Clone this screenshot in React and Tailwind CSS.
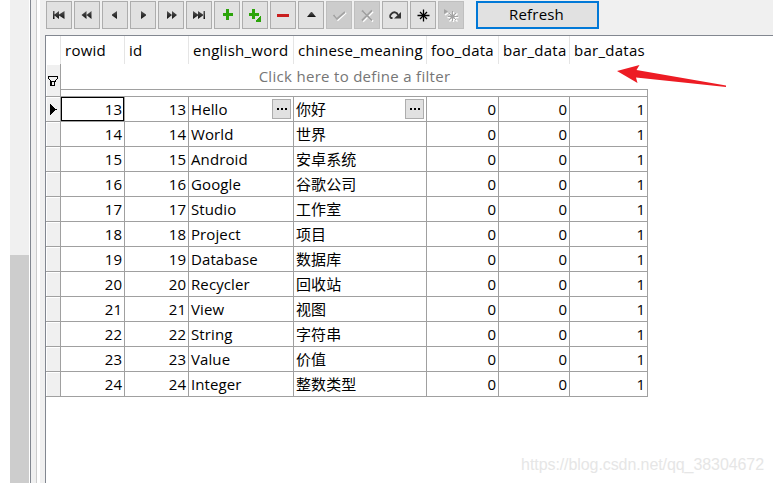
const columns = [
  { key: "rowid", width: "w-16" },
  { key: "id", width: "w-16" },
  { key: "english_word", width: "w-[105px]" },
  { key: "chinese_meaning", width: "w-[133px]" },
  { key: "foo_data", width: "w-[72px]" },
  { key: "bar_data", width: "w-[71px]" },
  { key: "bar_datas", width: "w-[78px]" },
];

const words = [
  [13, "Hello", "你好"],
  [14, "World", "世界"],
  [15, "Android", "安卓系统"],
  [16, "Google", "谷歌公司"],
  [17, "Studio", "工作室"],
  [18, "Project", "项目"],
  [19, "Database", "数据库"],
  [20, "Recycler", "回收站"],
  [21, "View", "视图"],
  [22, "String", "字符串"],
  [23, "Value", "价值"],
  [24, "Integer", "整数类型"],
];

// Every icon is drawn on a 24x26 grid, the inside of a toolbar button
const icons = [
  {
    name: "first",
    art: <path fill="url(#ink)" d="M6 9h1.500v8H6zM12 9v8l-4.500-3.500v-1zM17.500 9v8L12 13.500v-1z" />,
  },
  {
    name: "prior page",
    art: <path fill="url(#ink)" d="M11.500 9v8l-5-4zM16.500 9v8l-5-4z" />,
  },
  { name: "prior", art: <path fill="url(#ink)" d="M14 9v8l-5-3.500v-1z" /> },
  { name: "next", art: <path fill="url(#ink)" d="M10 9v8l5-3.500v-1z" /> },
  {
    name: "next page",
    art: <path fill="url(#ink)" d="M8 9v8l5-4zM13 9v8l5-4z" />,
  },
  {
    name: "last",
    art: <path fill="url(#ink)" d="M6 9v8l5-3.500v-1zM11 9v8l5-3.500v-1zM16.500 9H18v8h-1.500z" />,
  },
  {
    name: "insert",
    art: <path fill="#2ca40b" d="M11 7h3v4h4v3h-4v4h-3v-4H8v-3h3z" />,
  },
  {
    name: "append",
    art: (
      <path
        fill="#2ca40b"
        d="M9 7h3v4h4v3h-4v3H9v-3H6v-3h3zM18 14v6h-5v-2h1v-1h1v-1h1v-1h1v-1z"
      />
    ),
  },
  { name: "delete", art: <path fill="#c91f1f" d="M6 12h12v3H6z" /> },
  { name: "edit", art: <path fill="url(#ink)" d="M12 10h1l4 5H8z" /> },
  {
    name: "post",
    disabled: true,
    art: (
      <g fill="none" strokeWidth="1.800">
        <path stroke="#fff" d="M7.500 14l3.500 4 8-7.500" />
        <path stroke="#a3a3a3" d="M6.500 13l3.500 4 8-7" />
      </g>
    ),
  },
  {
    name: "cancel",
    disabled: true,
    art: (
      <g fill="none" strokeWidth="1.800">
        <path stroke="#fff" d="M8 9.500l10 10M18 9.500l-10 10" />
        <path stroke="#a3a3a3" d="M7 8.500l10 10M17 8.500l-10 10" />
      </g>
    ),
  },
  {
    name: "refresh",
    art: (
      <g>
        <path
          fill="none"
          stroke="#333"
          strokeWidth="1.800"
          d="M9.500 16H8c-1.500-1-1-3 .5-4.300C10.500 9.500 14 9.800 15 13"
        />
        <path fill="#333" d="M18 10v6.500h-7z" />
      </g>
    ),
  },
  {
    name: "save bookmark",
    art: (
      <g stroke="#000" fill="none">
        <path d="M12.500 7.500v12M6.500 13.500h12" strokeWidth="1.300" />
        <path d="M9 10l7 7M16 10l-7 7" strokeWidth="1.300" />
        <path fill="#000" d="M11.500 12.500h2v2h-2z" />
      </g>
    ),
  },
  {
    name: "goto bookmark",
    disabled: true,
    art: (
      <g fill="none">
        <path
          stroke="#fff"
          strokeWidth="1.300"
          d="M14.500 10v10M8.500 15.500h11M10.500 11.500l8 8M18.500 11.500l-8 8M6 13l3-2"
        />
        <path stroke="#a3a3a3" d="M13.500 9v10M9 14.500h10M10 11l7 7M17 11l-7 7" />
        <path fill="#a3a3a3" d="M5 7v5l4-2.500zM11.500 12.500h4v4h-4z" />
      </g>
    ),
  },
];

function ToolButton({ name, art, disabled }) {
  return (
    <button
      aria-label={name}
      disabled={disabled}
      className={`h-7 w-[26px] border ${
        disabled ? "border-[#bfbfbf] bg-[#cccccc]" : "border-[#adadad] bg-[#e1e1e1]"
      }`}
    >
      <svg width="24" height="26" viewBox="0 0 24 26">
        <defs>
          <linearGradient id="ink" x1="0" y1="0" x2="0" y2="1">
            <stop offset="0" stopColor="#555" />
            <stop offset="1" stopColor="#111" />
          </linearGradient>
        </defs>
        {art}
      </svg>
    </button>
  );
}

function DotsButton() {
  return (
    <button
      aria-label="more"
      className="mr-0.5 flex h-5 w-[19px] items-center justify-center gap-0.5 border border-[#adadad] bg-[#e1e1e1]"
    >
      <i className="size-0.5 bg-black" />
      <i className="size-0.5 bg-black" />
      <i className="size-0.5 bg-black" />
    </button>
  );
}

function NumberCell({ value, width, selected }) {
  return (
    <div
      className={`flex h-[25px] items-center justify-end border-r border-b border-[#a0a0a0] ${width} ${
        selected ? "" : "pr-[2px]"
      }`}
    >
      {selected ? (
        <span className="flex h-6 w-full items-center justify-end border border-black pr-px">
          {value}
        </span>
      ) : (
        value
      )}
    </div>
  );
}

function TextCell({ value, width, editable }) {
  return (
    <div
      className={`flex h-[25px] items-center justify-between border-r border-b border-[#a0a0a0] pl-[2px] tracking-[0.1px] ${width}`}
    >
      <span>{value}</span>
      {editable && <DotsButton />}
    </div>
  );
}

function Row({ row, active }) {
  const [id, english, chinese] = row;
  return (
    <div className="flex">
      <div className="flex h-[25px] w-[15px] items-center border-r border-b border-[#a0a0a0] bg-[#f0f0f0] shadow-[inset_1px_1px_0_#fff]">
        {active && (
          <svg width="14" height="24" viewBox="0 0 14 24" shapeRendering="crispEdges">
            <path d="M4 7h1v1h1v1h1v1h1v1h1v1h2v1H9v1H8v1H7v1H6v1H5v1H4z" />
          </svg>
        )}
      </div>
      <NumberCell value={id} width="w-16" selected={active} />
      <NumberCell value={id} width="w-16" />
      <TextCell value={english} width="w-[105px]" editable={active} />
      <TextCell value={chinese} width="w-[133px]" editable={active} />
      <NumberCell value={0} width="w-[72px]" />
      <NumberCell value={0} width="w-[71px]" />
      <NumberCell value={1} width="w-[78px]" />
    </div>
  );
}

export default function App() {
  return (
    <div className="relative flex h-[483px] w-[773px] overflow-hidden bg-white pl-2.5 font-['Open_Sans','Noto_Sans_CJK_SC',sans-serif] text-[15px] leading-6 text-black">
      {/* Scrollbar of the left pane */}
      <div className="w-[19px] bg-[#f0f0f0] pt-[255px]">
        <div className="h-full bg-[#cdcdcd]" />
      </div>
      <div className="ml-px w-px bg-[#828790]" />
      <div className="w-1.5 border-r border-[#cccccc] bg-[#f0f0f0]" />

      <div className="ml-[3px] flex flex-1 flex-col bg-[#f0f0f0]">
        {/* Toolbar */}
        <div className="flex h-[35px] gap-0.5 pt-px pl-1.5">
          {icons.map((icon) => (
            <ToolButton key={icon.name} {...icon} />
          ))}
          <button className="ml-2.5 h-7 w-[123px] border-2 border-[#0078d7] bg-[#e1e1e1] pb-0.5 pr-0.5 leading-[22px] tracking-[0.2px]">
            Refresh
          </button>
        </div>

        {/* Grid */}
        <div className="ml-[5px] flex-1 border-t border-l border-[#828790] bg-white">
          <div className="flex h-7">
            <div className="w-[15px] border-r border-[#e5e5e5]" />
            {columns.map((col) => (
              <div
                key={col.key}
                className={`border-r border-[#e5e5e5] pt-0.5 pl-1 tracking-[0.26px] whitespace-nowrap last:border-0 ${col.width}`}
              >
                {col.key}
              </div>
            ))}
          </div>
          <div className="flex h-[33px] w-[602px]">
            <div className="flex w-[15px] border-r border-b border-[#a0a0a0] bg-[#f0f0f0] pt-3 pl-0.5 shadow-[inset_1px_1px_0_#fff]">
              <svg
                width="11"
                height="12"
                viewBox="0 0 11 12"
                fill="#000"
                shapeRendering="crispEdges"
                className="shrink-0"
              >
                <path d="M0 0h10v1H0zM0 1h1v2H0zM9 1h1v2H9zM1 3h1v1H1zM8 3h1v1H8zM2 4h1v1H2zM7 4h1v1H7zM2 5h6v1H2zM2 6h2v4H2zM6 6h1v4H6zM2 9h5v1H2z" />
              </svg>
            </div>
            <div className="flex flex-1 flex-col">
              <div className="h-[26px] border-b border-[#a0a0a0] text-center tracking-[0.3px] text-[#767676]">
                Click here to define a filter
              </div>
              <div className="flex-1 border-r border-b border-[#a0a0a0]" />
            </div>
          </div>
          {words.map((row, i) => (
            <Row key={row[0]} row={row} active={i === 0} />
          ))}
        </div>
      </div>

      {/* Callout arrow over the last column */}
      <svg className="absolute top-[62px] left-[614px]" width="116" height="28" viewBox="0 0 116 28">
        <path fill="#ed1c24" d="M3 9l22.500-6-3 5 89.500 15.500v1.500L22 15.500l1.500 5.500z" />
      </svg>
      <div className="absolute right-[9px] bottom-1.5 font-['Liberation_Sans'] text-base tracking-[-0.08px] text-[#e6e6e6]">
        https://blog.csdn.net/qq_38304672
      </div>
    </div>
  );
}
